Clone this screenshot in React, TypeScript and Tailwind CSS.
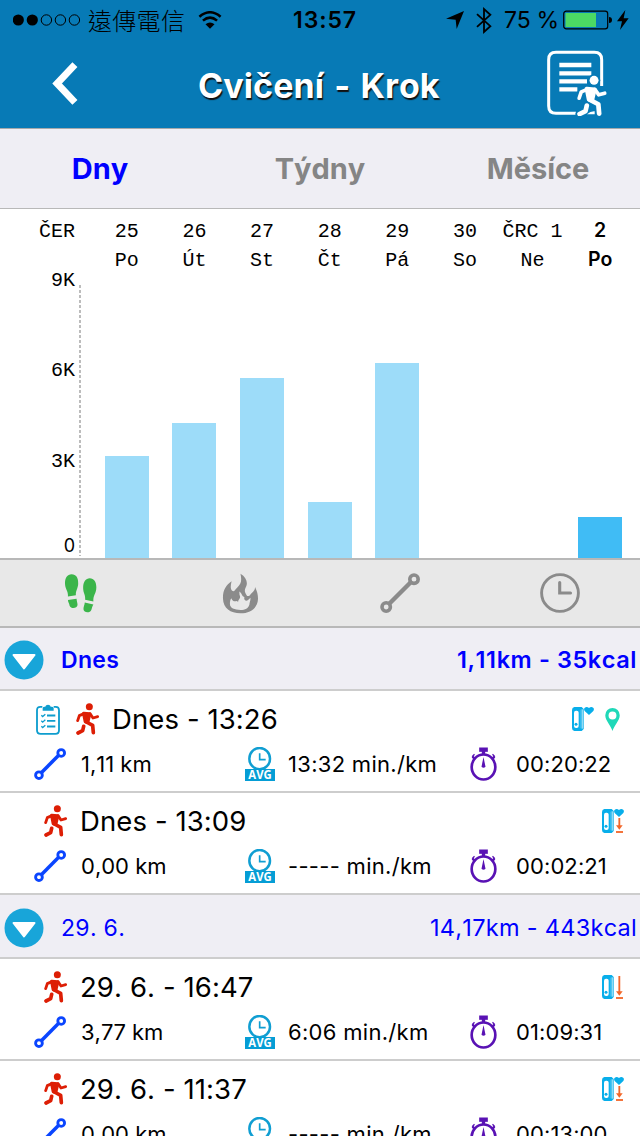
import type { ReactNode } from "react";

const HEADER_BLUE = "#077ab6";

function RunnerFigure({ color, extra = 0 }: { color: string; extra?: number }) {
  return (
    <g stroke={color} fill="none" strokeLinecap="round" strokeLinejoin="round">
      <circle cx="172" cy="359" r={10.5 + extra} fill={color} stroke="none" />
      <path d="M156 380L142 386L137 401" strokeWidth={8.5 + extra * 2} />
      <path d="M174 380L183 393L197 389" strokeWidth={8.5 + extra * 2} />
      <path d="M155 379L173 381L167 406L160 404Z" fill={color} strokeWidth={10 + extra * 2} />
      <path d="M163 405L182 415L184 437" strokeWidth={11 + extra * 2} />
      <path d="M155 418L152 431L138 438" strokeWidth={11 + extra * 2} />
    </g>
  );
}

function Runner() {
  return (
    <svg viewBox="132 348 72 96" className="h-8 w-6 shrink-0">
      <RunnerFigure color="#dd1e05" />
    </svg>
  );
}

function Checklist() {
  return (
    <svg viewBox="0 0 72 92" className="h-[31px] w-6 shrink-0" fill="none" stroke="#0e9dce">
      <path d="M19 8H13Q3 8 3 18V78Q3 89 14 89H58Q69 89 69 78V18Q69 8 59 8H53" strokeWidth="5.5" />
      <path d="M20 20V12Q21 8 26 8H28C29 0 43 0 44 8H47Q52 8 53 12V20Z" fill="#0e9dce" stroke="none" />
      <path d="M33 34H58M33 50H58M33 67H58" strokeWidth="5.5" />
      <path d="M16 33L20 37L28 30M16 50L20 54L28 47M16 66L20 70L28 63" strokeWidth="4" />
    </svg>
  );
}

function Route({ color, className }: { color: string; className: string }) {
  return (
    <svg viewBox="0 0 40 40" className={className} fill="none" stroke={color}>
      <path d="M9.5 30.5L30.5 9.5" strokeWidth="4.4" />
      <circle cx="6.2" cy="34" r="4.2" strokeWidth="3.6" />
      <circle cx="34" cy="6.2" r="4.2" strokeWidth="3.6" />
    </svg>
  );
}

function AverageClock() {
  return (
    <svg viewBox="0 0 90 102" className="h-[34px] w-[30px]">
      <ellipse cx="44" cy="35" rx="31" ry="32" fill="none" stroke="#109ed2" strokeWidth="7.5" />
      <path d="M44 19V38H62" fill="none" stroke="#109ed2" strokeWidth="5" />
      <path d="M0 66H90V102H0Z" fill="#059dd5" />
      <text x="10" y="96" fill="white" fontSize="35" fontWeight="700" fontFamily="Open Sans, sans-serif" textLength="70" lengthAdjust="spacingAndGlyphs">AVG</text>
    </svg>
  );
}

function Stopwatch() {
  return (
    <svg viewBox="0 0 80 102" className="h-[34px] w-[27px]" fill="none" stroke="#5912b4">
      <ellipse cx="40" cy="60" rx="35.5" ry="37.5" strokeWidth="8" />
      <path d="M27 8H53" strokeWidth="13" />
      <path d="M40 11V23" strokeWidth="10" />
      <path d="M7 29L15 37M73 29L65 37" strokeWidth="7" />
      <path d="M6 29L13 22M67 22L74 29" strokeWidth="4" />
      <path d="M40 30L46 59Q40 65 34 59Z" fill="#5912b4" stroke="none" />
    </svg>
  );
}

function Band({ heart, sync }: { heart?: boolean; sync?: boolean }) {
  return (
    <svg viewBox="0 0 66 72" className="h-6 w-[22px]" fill="none">
      <path d="M7 0H29L35 6V66L29 72H7Q0 70 0 63V9Q0 2 7 0Z" fill="#08aeea" />
      <rect x="6" y="11" width="14" height="52" rx="6" fill="white" />
      <path d="M25 8V64" stroke="#6fcff4" strokeWidth="1.5" />
      <path d="M30.5 7V65" stroke="#d8f3fc" strokeWidth="3" />
      <circle cx="12" cy="52" r="4.5" fill="#08aeea" />
      {heart && <path d="M51 24L38 12C32 3 43 -4 51 3C59 -4 70 3 64 12Z" fill="#08aeea" />}
      {sync && (
        <g stroke="#f2672a">
          <path d={heart ? "M52 27V53" : "M52 3V53"} strokeWidth="5.5" />
          <path d="M42 49H62L52 62Z" fill="#f2672a" stroke="none" />
          <path d="M42 69H63" strokeWidth="5.5" />
        </g>
      )}
    </svg>
  );
}

function Pin() {
  return (
    <svg viewBox="0 0 44 70" className="ml-[11px] mr-1 h-[23px] w-[15px]">
      <path fillRule="evenodd" fill="#1fd8b8" d="M22 70C17 53 0 38 0 22A22 22 0 0 1 44 22C44 38 27 53 22 70ZM22 11A12 12 0 1 0 22 35A12 12 0 1 0 22 11Z" />
    </svg>
  );
}

function StatusBar() {
  return (
    <div className="flex h-10 items-center pl-[13px] text-black">
      <svg viewBox="0 0 68 12" className="h-3 w-[68px]" stroke="black">
        <circle cx="5.3" cy="6" r="5.6" stroke="none" />
        <circle cx="19.3" cy="6" r="5.6" stroke="none" />
        <circle cx="33.4" cy="6" r="5.2" fill="none" strokeWidth="1" />
        <circle cx="47.4" cy="6" r="5.2" fill="none" strokeWidth="1" />
        <circle cx="61.4" cy="6" r="5.2" fill="none" strokeWidth="1" />
      </svg>
      <span className="ml-[7px] w-[98px] whitespace-nowrap font-['Noto_Sans_CJK_TC',sans-serif] text-[24px] font-light leading-10 tracking-[0.3px]">遠傳電信</span>
      <svg viewBox="0 0 72 56" className="ml-3 h-[18px] w-6" fill="none" stroke="black">
        <path d="M3 18Q36 -10 69 18" strokeWidth="8" />
        <path d="M14 30Q36 11 58 30" strokeWidth="8" />
        <path d="M36 55L22 41Q36 30 50 41Z" fill="black" stroke="none" />
      </svg>
      <span className="ml-[71px] w-[65px] whitespace-nowrap text-[23px] font-semibold leading-10 tracking-[0.9px]">13:57</span>
      <svg viewBox="0 0 54 54" className="ml-[88px] h-[18px] w-[18px]">
        <path d="M54 0L32 54L29 26L0 23Z" />
      </svg>
      <svg viewBox="0 0 48 80" className="ml-3 h-[27px] w-4" fill="none" stroke="black" strokeWidth="5.5">
        <path d="M3 21L43 57L24 74V6L43 23L3 59" />
      </svg>
      <span className="ml-3 w-[59px] whitespace-nowrap text-[23px] leading-10 tracking-[-0.3px]">75 %</span>
      <svg viewBox="0 0 50 20" className="h-5 w-[50px]">
        <rect x="0.7" y="1.2" width="44" height="17.6" rx="2.6" fill="none" stroke="black" strokeWidth="1.2" />
        <path d="M2.5 3H33V17H2.5Z" fill="#4cd964" />
        <path d="M46 7Q49 7 49 10Q49 13 46 13Z" />
      </svg>
      <svg viewBox="0 0 36 60" className="ml-1 h-5 w-3">
        <path d="M25 0L0 34H15L9 60L35 25H20Z" />
      </svg>
    </div>
  );
}

function ReportIcon() {
  return (
    <svg viewBox="680 150 186 198" className="h-[66px] w-[62px]" fill="none" stroke="white">
      <path d="M767 340H707Q685 340 685 318V179Q685 157 707 157H822Q844 157 844 179V258" strokeWidth="9" />
      <path d="M717 195H813M717 220H813M717 244H800M717 268H771" strokeWidth="13" />
      <g transform="translate(601 -218.5) scale(1.28)">
        <RunnerFigure color={HEADER_BLUE} extra={4} />
        <RunnerFigure color="white" />
      </g>
      <path d="M800 343Q811 333 823 334V343Z" fill="white" stroke="none" />
    </svg>
  );
}

const days = [
  { date: "25", day: "Po", h: 102 },
  { date: "26", day: "Út", h: 135 },
  { date: "27", day: "St", h: 180 },
  { date: "28", day: "Čt", h: 56 },
  { date: "29", day: "Pá", h: 195 },
  { date: "30", day: "So", h: 0 },
  { date: "ČRC 1", day: "Ne", h: 0 },
  { date: "2", day: "Po", h: 41, today: true },
];

function Chart() {
  return (
    <div className="flex h-[349px] shrink-0 bg-white font-['Liberation_Mono',monospace] text-[20px] leading-[29px] text-black">
      <div className="flex w-[75px] flex-col text-right">
        <div className="mt-2 h-[49px] shrink-0">ČER</div>
        <div className="h-[90px] shrink-0">9K</div>
        <div className="h-[91px] shrink-0">6K</div>
        <div className="h-[86px] shrink-0">3K</div>
        <div className="font-['Inter',sans-serif] text-[18px] leading-[25px]">0</div>
      </div>
      <svg viewBox="0 0 2 271" className="ml-1 mt-[76px] h-[271px] w-0.5">
        <path d="M1 0V271" stroke="#bcbcbc" strokeWidth="2" strokeDasharray="3 2" />
      </svg>
      <div className="ml-[12px] grid w-[541px] grid-cols-8">
        {days.map((d) => (
          <div key={d.date} className="flex flex-col items-center">
            <div className={d.today ? "mt-[7px] whitespace-nowrap text-center font-['Inter',sans-serif] text-[19.5px] font-semibold" : "mt-2 whitespace-nowrap text-center"}>
              <div>{d.date}</div>
              <div>{d.day}</div>
            </div>
            <div className={d.today ? "mt-auto w-11 bg-[#40bcf5]" : "mt-auto w-11 bg-[#9ddcf9]"} style={{ height: d.h }} />
          </div>
        ))}
      </div>
    </div>
  );
}

function MetricBar() {
  return (
    <div className="grid h-[70px] shrink-0 grid-cols-4 place-items-center border-y-2 border-[#b8b8b8] bg-[#e8e8e8]">
      <svg viewBox="190 98 100 122" className="h-[41px] w-[33px]" fill="#3bb54a">
        <path d="M213 101C227 101 234 112 233 130C232 144 225 151 226 164L202 168C203 151 193 146 193 128C193 112 200 101 213 101Z" />
        <path d="M202 179L228 175C229 184 231 187 231 194C230 205 211 207 207 196C206 189 202 186 202 179Z" />
        <path d="M268 113C281 113 288 124 288 140C288 160 278 163 279 183L254 178C256 163 248 158 248 142C248 124 256 113 268 113Z" />
        <path d="M253 186L279 192C275 199 275 202 273 208C269 220 250 218 249 207C249 198 252 195 253 186Z" />
      </svg>
      <svg viewBox="665 96 110 124" className="h-[41px] w-[37px]">
        <path
          fillRule="evenodd"
          fill="#8b8b8b"
          d="M720 98C737 108 743 124 737 137C732 148 731 153 739 164C741 168 748 165 750 161C755 153 764 151 764 138C770 151 773 160 773 174C772 202 750 218 720 218C689 218 668 202 667 174C666 149 676 132 693 121C690 134 689 143 694 149C700 156 703 146 709 141C723 129 724 119 720 98ZM716 152C726 158 722 165 732 169C729 176 735 183 743 178C745 175 747 174 750 171C751 180 747 184 747 191C744 203 734 207 720 208C702 208 688 202 688 190C688 181 689 178 692 172C697 182 704 184 709 179C710 169 720 166 716 152Z"
        />
        <path d="M714 160C713 168 704 170 704 179L713 183C713 173 724 174 716 160Z" fill="#8b8b8b" />
      </svg>
      <Route color="#8b8b8b" className="h-10 w-10" />
      <svg viewBox="0 0 40 40" className="h-10 w-10" fill="none" stroke="#8b8b8b">
        <circle cx="20" cy="20" r="18.4" strokeWidth="2.9" />
        <path d="M19.7 9.5V20H30.5" strokeWidth="3.1" strokeLinecap="round" />
      </svg>
    </div>
  );
}

function SectionHeader({ label, total, bold }: { label: string; total: string; bold?: boolean }) {
  return (
    <div className={bold ? "flex h-[63px] shrink-0 items-center border-b-2 border-[#cdcdcd] bg-[#efeef4] pl-1 pr-[3px] pt-0.5 font-semibold text-[#0000ff]" : "flex h-16 shrink-0 items-center border-b-2 border-[#cdcdcd] bg-[#efeef4] pl-1 pr-[3px] pt-[3px] text-[#0000ff]"}>
      <svg viewBox="0 0 40 40" className="h-10 w-10">
        <circle cx="20" cy="20" r="19.5" fill="#18a5d9" />
        <path d="M9.5 15H30.5L20 28.5Z" fill="white" stroke="white" strokeWidth="2" strokeLinejoin="round" />
      </svg>
      <span className="ml-[17px] mt-0.5 text-[23px] tracking-[0.3px]">{label}</span>
      <span className={bold ? "ml-auto text-[23.5px] tracking-[0.6px]" : "ml-auto text-[23.5px] tracking-[0.3px]"}>{total}</span>
    </div>
  );
}

function Activity({ title, distance, pace, time, planned, children }: { title: string; distance: string; pace: string; time: string; planned?: boolean; children: ReactNode }) {
  return (
    <div className="h-[102px] shrink-0 border-b-2 border-[#cdcdcd] bg-white text-black">
      <div className="flex h-14 items-center pr-4">
        {planned ? (
          <div className="flex w-28 items-center gap-4 pl-9"><Checklist /><Runner /></div>
        ) : (
          <div className="flex w-20 pl-11"><Runner /></div>
        )}
        <span className="text-[27.5px] leading-8 tracking-[0.1px]">{title}</span>
        <div className="ml-auto flex items-center">{children}</div>
      </div>
      <div className="grid h-8 grid-cols-[34px_47px_164px_43px_182px_46px_1fr] items-center text-[22px]">
        <span />
        <Route color="#0a45ff" className="h-8 w-8" />
        <span>{distance}</span>
        <AverageClock />
        <span className="tracking-[0.3px]">{pace}</span>
        <Stopwatch />
        <span className="tracking-[0.1px]">{time}</span>
      </div>
    </div>
  );
}

export default function App() {
  return (
    <div className="flex h-[1136px] w-[640px] flex-col overflow-hidden bg-white font-['Inter',sans-serif] [font-kerning:none]">
      <header className="h-[129px] shrink-0 border-b border-[#a5a9ac] bg-[#077ab6]">
        <StatusBar />
        <div className="flex h-[88px] items-center">
          <svg viewBox="0 0 78 130" className="ml-[52px] mb-[1px] h-[43px] w-[26px]" fill="none" stroke="white" strokeWidth="21">
            <path d="M69 8L15 65L69 122" />
          </svg>
          <h1 className="ml-[120px] mt-0.5 w-[246px] whitespace-nowrap text-[34px] font-bold tracking-[0.1px] [word-spacing:2px] text-white [text-shadow:1px_2px_1px_#111]">Cvičení - Krok</h1>
          <div className="mb-0.5 ml-[103px]"><ReportIcon /></div>
        </div>
      </header>
      <nav className="flex h-20 shrink-0 items-center border-b border-[#b8b8b8] bg-[#efeef4] text-[29px] font-bold text-[#858585]">
        <span className="w-[200px] text-center text-[#0000ff]">Dny</span>
        <span className="w-[240px] text-center">Týdny</span>
        <span className="w-[196px] text-center">Měsíce</span>
      </nav>
      <Chart />
      <MetricBar />
      <SectionHeader bold label="Dnes" total="1,11km - 35kcal" />
      <Activity planned title="Dnes - 13:26" distance="1,11 km" pace="13:32 min./km" time="00:20:22"><Band heart /><Pin /></Activity>
      <Activity title="Dnes - 13:09" distance="0,00 km" pace="----- min./km" time="00:02:21"><Band heart sync /></Activity>
      <SectionHeader label="29. 6." total="14,17km - 443kcal" />
      <Activity title="29. 6. - 16:47" distance="3,77 km" pace="6:06 min./km" time="01:09:31"><Band sync /></Activity>
      <Activity title="29. 6. - 11:37" distance="0,00 km" pace="----- min./km" time="00:13:00"><Band heart sync /></Activity>
    </div>
  );
}
